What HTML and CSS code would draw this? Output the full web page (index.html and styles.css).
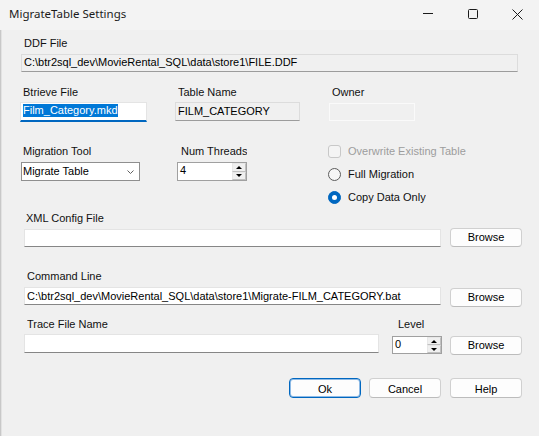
FILE: index.html
```html
<!DOCTYPE html>
<html>
<head>
<meta charset="utf-8">
<title>MigrateTable Settings</title>
<link rel="stylesheet" href="styles.css">
</head>
<body>
<div class="titlebar">
  <div class="title">MigrateTable Settings</div>
  <div class="caption">
    <div class="cap"><svg width="10" height="10" viewBox="0 0 10 10"><path d="M0 4.5H10" stroke="#1a1a1a" stroke-width="1"/></svg></div>
    <div class="cap"><svg width="10" height="10" viewBox="0 0 10 10"><rect x="0.5" y="0.5" width="9" height="9" rx="1" fill="none" stroke="#1a1a1a" stroke-width="1"/></svg></div>
    <div class="cap"><svg width="11" height="11" viewBox="0 0 11 11"><path d="M0.5 0.5L10.5 10.5M10.5 0.5L0.5 10.5" stroke="#1a1a1a" stroke-width="1"/></svg></div>
  </div>
</div>

<div class="dialog">
  <div class="lbl l-ddf">DDF File</div>
  <div class="edit ro ddf">C:\btr2sql_dev\MovieRental_SQL\data\store1\FILE.DDF</div>

  <div class="row2">
    <div class="g-btr">
      <div class="lbl">Btrieve File</div>
      <div class="edit focus"><span class="sel">Film_Category.mkd</span></div>
    </div>
    <div class="g-tbl">
      <div class="lbl">Table Name</div>
      <div class="edit ro tbl">FILM_CATEGORY</div>
    </div>
    <div class="g-own">
      <div class="lbl">Owner</div>
      <div class="edit own"></div>
    </div>
  </div>

  <div class="row3">
    <div class="g-mig">
      <div class="lbl">Migration Tool</div>
      <div class="combo">
        <span>Migrate Table</span>
        <svg class="chev" width="7" height="4" viewBox="0 0 7 4"><path d="M0.5 0.5L3.5 3.5L6.5 0.5" fill="none" stroke="#606060" stroke-width="1"/></svg>
      </div>
    </div>
    <div class="g-thr">
      <div class="lbl">Num Threads</div>
      <div class="spin thr">
        <span class="spin-val">4</span>
        <div class="spin-btns"><div class="sb"><i class="up"></i></div><div class="sb"><i class="dn"></i></div></div>
      </div>
    </div>
    <div class="opts">
      <div class="opt disabled"><span class="chk"></span><span class="otxt">Overwrite Existing Table</span></div>
      <div class="opt"><span class="radio"></span><span class="otxt">Full Migration</span></div>
      <div class="opt"><span class="radio on"><span class="dot"></span></span><span class="otxt">Copy Data Only</span></div>
    </div>
  </div>

  <div class="frow r-xml">
    <div class="fcol wide">
      <div class="lbl">XML Config File</div>
      <div class="edit white"></div>
    </div>
    <button class="btn browse">Browse</button>
  </div>

  <div class="frow r-cmd">
    <div class="fcol wide">
      <div class="lbl">Command Line</div>
      <div class="edit white">C:\btr2sql_dev\MovieRental_SQL\data\store1\Migrate-FILM_CATEGORY.bat</div>
    </div>
    <button class="btn browse">Browse</button>
  </div>

  <div class="frow r-trc">
    <div class="fcol trace">
      <div class="lbl">Trace File Name</div>
      <div class="edit white"></div>
    </div>
    <div class="fcol level">
      <div class="lbl">Level</div>
      <div class="spin lvl">
        <span class="spin-val">0</span>
        <div class="spin-btns"><div class="sb"><i class="up"></i></div><div class="sb"><i class="dn"></i></div></div>
      </div>
    </div>
    <button class="btn browse">Browse</button>
  </div>

  <div class="actions">
    <button class="btn act default">Ok</button>
    <button class="btn act cancel">Cancel</button>
    <button class="btn act help">Help</button>
  </div>
</div>
</body>
</html>
```

FILE: styles.css
```css
html, body {
  margin: 0;
  padding: 0;
}
body {
  width: 539px;
  height: 436px;
  overflow: hidden;
  background: #f0f0f0;
  font-family: "Liberation Sans", Arial, sans-serif;
  font-size: 11px;
  color: #000;
  box-shadow: inset 1px 0 0 #c8c8c8, inset 2px 0 0 #e2e2e2;
}

/* title bar */
.titlebar {
  height: 30px;
  display: flex;
  align-items: flex-start;
  background: #f3f3f3;
}
.title {
  flex: 1;
  margin-left: 9px;
  font-family: "Noto Sans", "Open Sans", sans-serif;
  font-size: 11.5px;
  line-height: 28px;
  color: #1b1b1b;
}
.caption {
  display: flex;
  margin-right: -1px;
}
.cap {
  width: 45px;
  height: 28px;
  display: flex;
  align-items: center;
  justify-content: center;
}

/* generic */
.lbl {
  line-height: 13px;
  height: 13px;
  white-space: nowrap;
  overflow: hidden;
  background: #f0f0f0;
  color: #111;
}
.otxt {
  background: #f0f0f0;
  overflow: hidden;
  color: #111;
}
.opt.disabled .otxt { color: #9d9d9d; }
.edit {
  box-sizing: border-box;
  white-space: nowrap;
  overflow: hidden;
  padding-left: 2px;
}
.ro {
  background: #f0f0f0;
  border: 1px solid #dcdcdc;
  border-bottom-color: #9c9c9c;
}
.white {
  background: #fff;
  border: 1px solid #e4e4e4;
  border-bottom-color: #868686;
  height: 18px;
  line-height: 16px;
  margin-top: 4px;
}

/* DDF */
.l-ddf { margin: 7px 0 0 24px; width: 100px; }
.ddf {
  margin: 4px 0 0 21px;
  width: 497px;
  height: 18px;
  line-height: 14px;
}

/* row 2 */
.row2 {
  display: flex;
  margin-top: 14px;
}
.g-btr { margin-left: 20px; width: 127px; }
.g-btr .lbl { margin-left: 3px; }
.focus {
  margin-top: 3px;
  height: 20px;
  background: #fff;
  border: 1px solid #e4e4e4;
  border-bottom: 2px solid #0067c0;
  padding-top: 1px;
}
.sel {
  display: inline-block;
  line-height: 13px;
  background: #0078d7;
  color: #fff;
  vertical-align: top;
}
.g-tbl { margin-left: 28px; width: 125px; }
.g-tbl .lbl { margin-left: 3px; }
.tbl {
  margin-top: 3px;
  height: 19px;
  line-height: 16px;
}
.g-own { margin-left: 29px; width: 86px; }
.g-own .lbl { margin-left: 3px; }
.own {
  margin-top: 4px;
  height: 18px;
  background: #f0f0f0;
  border: 1px solid #fafafa;
}

/* row 3 */
.row3 {
  display: flex;
  margin-top: 18px;
}
.g-mig { padding-top: 5px; margin-left: 21px; width: 119px; }
.g-mig .lbl { margin-left: 2px; }
.combo {
  box-sizing: border-box;
  margin-top: 4px;
  height: 19px;
  background: #fff;
  border: 1px solid #8f8f8f;
  padding-left: 1px;
  line-height: 16px;
  display: flex;
  justify-content: space-between;
  align-items: flex-start;
}
.chev {
  margin: 7px 5px 0 0;
}
.g-thr { padding-top: 5px; margin-left: 37px; width: 70px; }
.g-thr .lbl { margin-left: 4px; }
.spin {
  box-sizing: border-box;
  background: #fff;
  border: 1px solid #a0a0a0;
  display: flex;
  justify-content: space-between;
}
.spin.thr {
  margin-top: 4px;
  height: 19px;
  line-height: 15px;
}
.spin-val { padding-left: 2px; }
.spin-btns {
  width: 14px;
  display: flex;
  flex-direction: column;
}
.sb {
  flex: 1;
  background: #f0f0f0;
  border: 1px solid #e8e8e8;
  border-right-color: #c0c0c0;
  border-bottom-color: #c0c0c0;
  box-sizing: border-box;
  display: flex;
  align-items: center;
  justify-content: center;
}
.sb i {
  display: block;
  width: 0;
  height: 0;
  border-left: 3px solid transparent;
  border-right: 3px solid transparent;
}
.sb i.up { border-bottom: 3px solid #000; }
.sb i.dn { border-top: 3px solid #000; }

.opts {
  margin-left: 81px;
  display: flex;
  flex-direction: column;
}
.opt {
  height: 23px;
  display: flex;
  align-items: center;
  line-height: 13px;
  white-space: nowrap;
}
.chk {
  box-sizing: border-box;
  width: 13px;
  height: 13px;
  border: 1px solid #c8c8c8;
  border-radius: 3px;
  background: #f4f4f4;
  margin-right: 7px;
}
.radio {
  box-sizing: border-box;
  width: 13px;
  height: 13px;
  border: 1px solid #5c5c5c;
  border-radius: 50%;
  background: #f6f6f6;
  margin-right: 7px;
  display: flex;
  align-items: center;
  justify-content: center;
}
.radio.on {
  background: #0067c0;
  border-color: #0067c0;
}
.dot {
  width: 5px;
  height: 5px;
  border-radius: 50%;
  background: #fff;
}

/* file rows */
.frow {
  display: flex;
  align-items: flex-start;
}
.r-xml { margin-top: 3px; }
.r-cmd { margin-top: 23px; }
.r-trc { margin-top: 11px; }
.fcol.wide { margin-left: 24px; width: 417px; }
.r-xml .lbl { margin-left: 2px; }
.r-cmd .lbl { margin-left: 3px; }
.r-trc .trace .lbl { margin-left: 3px; }
.fcol.trace { margin-left: 24px; width: 355px; }
.r-trc .trace .white { margin-top: 3px; height: 19px; }
.fcol.level { margin-left: 13px; width: 50px; }
.fcol.level .lbl { margin-left: 6px; }
.spin.lvl {
  margin-top: 5px;
  height: 18px;
  line-height: 14px;
}

.btn {
  box-sizing: border-box;
  font-family: "Liberation Sans", Arial, sans-serif;
  font-size: 11px;
  color: #000;
  background: #fdfdfd;
  border: 1px solid #d0d0d0;
  border-bottom-color: #bcbcbc;
  border-radius: 4px;
  padding: 0;
  margin: 0;
  width: 72px;
  text-align: center;
}
.browse {
  height: 19px;
  line-height: 17px;
}
.r-xml .browse { margin: 16px 0 0 9px; }
.r-cmd .browse { margin: 18px 0 0 9px; }
.r-trc .browse { margin: 18px 0 0 8px; }

.actions {
  display: flex;
  margin: 23px 0 0 289px;
}
.act {
  height: 20px;
  line-height: 18px;
  padding-top: 1px;
}
.default {
  border: 1px solid #0067c0;
  box-shadow: inset 0 0 0 1px #8fbbe6;
}
.cancel { margin-left: 8px; }
.help { margin-left: 9px; }
```
